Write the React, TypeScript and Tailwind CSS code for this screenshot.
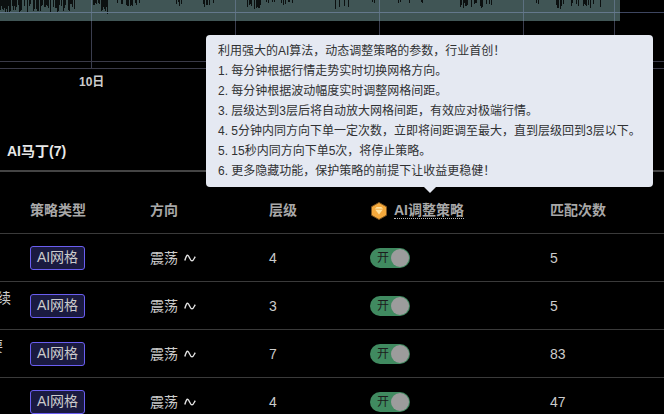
const font = { fontFamily: '"Liberation Sans","Noto Sans CJK SC",sans-serif' };

const tips = [
  "利用强大的AI算法，动态调整策略的参数，行业首创！",
  "1. 每分钟根据行情走势实时切换网格方向。",
  "2. 每分钟根据波动幅度实时调整网格间距。",
  "3. 层级达到3层后将自动放大网格间距，有效应对极端行情。",
  "4. 5分钟内同方向下单一定次数，立即将间距调至最大，直到层级回到3层以下。",
  "5. 15秒内同方向下单5次，将停止策略。",
  "6. 更多隐藏功能，保护策略的前提下让收益更稳健！",
];

const rows = [
  { left: "", pad: "pr-[19px]", level: "4", count: "5" },
  { left: "续", pad: "pr-[19px]", level: "3", count: "5" },
  { left: "要", pad: "pr-[27px]", level: "7", count: "83" },
  { left: "", pad: "pr-[19px]", level: "4", count: "47" },
];

const clusters: [number, number, number, number][] = [
  [0, 11, 15, 0.9],
  [12, 76, 12, 0.75],
  [93, 100, 6, 0.6],
  [101, 108, 15, 0.95],
  [117, 140, 7, 0.55],
  [176, 184, 6, 0.6],
  [203, 216, 7, 0.65],
  [247, 262, 9, 0.7],
  [263, 296, 5, 0.3],
  [335, 350, 11, 0.55],
  [372, 376, 4, 0.5],
  [395, 410, 5, 0.4],
  [420, 423, 3, 0.5],
  [460, 492, 8, 0.45],
  [497, 500, 4, 0.5],
  [536, 539, 6, 0.8],
  [553, 596, 9, 0.4],
  [600, 604, 8, 0.5],
];

function spikes() {
  let seed = 11;
  const r = () => {
    seed = (seed * 16807) % 2147483647;
    return seed / 2147483647;
  };
  let d = "";
  for (const [a, b, depth, density] of clusters) {
    for (let x = a; x < b; x++) {
      if (r() < density) d += `M${x + 0.5} 0V${(depth * (0.35 + 0.65 * r())).toFixed(0)}`;
    }
  }
  return d;
}

function Chart() {
  return (
    <svg width="664" height="70" className="block">
      <rect x="0" y="0" width="620" height="21" fill="#405555" />
      <path d={spikes()} stroke="#0c1010" strokeWidth="1" />
      {[91.5, 235.5, 379.5, 523.5, 614.5].map((x) => (
        <g key={x}>
          <path d={`M${x} 0V21`} stroke="#5c7080" />
          <path d={`M${x} 21V68`} stroke="#3a3d4e" />
        </g>
      ))}
      <path d="M0 12.5H620" stroke="#64788c" />
      <path d="M620 12.5H664" stroke="#3e4660" />
      <path d="M0 61.5H206M0 68.5H206M653 61.5H664M653 68.5H664" stroke="#3a3a48" />
    </svg>
  );
}

function Gem() {
  return (
    <svg width="18" height="18" viewBox="0 0 18 18" className="mr-[6px] shrink-0">
      <path d="M9 .5 16.5 4.7V13.3L9 17.5 1.5 13.3V4.7Z" fill="#f5a93c" stroke="#7d5520" />
      <path d="M4.8 7 6.6 5H11.4L13.2 7 9 12.6Z" fill="#ffe2a0" />
      <path d="M4.8 7.2H13.2" stroke="#ea9a30" strokeWidth=".8" />
    </svg>
  );
}

function Wave() {
  return (
    <svg width="12" height="12" viewBox="0 0 12 12" className="ml-[6px]" fill="none">
      <path d="M.8 8.5C2 4.5 2.8 3 3.8 3.3 5.2 3.7 6 8.8 8 8.8 9.5 8.8 10.4 6 11.2 4.6" stroke="#e4e4e4" strokeWidth="1.4" />
    </svg>
  );
}

function Row({ left, pad, level, count }: { left: string; pad: string; level: string; count: string }) {
  return (
    <div className="flex h-[48px] items-center border-b border-[#3a3a3a] text-[14px] text-[#cccccc]">
      <div className={`flex h-[32px] w-[30px] justify-end overflow-hidden whitespace-nowrap leading-[16px] ${pad}`}>{left}</div>
      <div className="w-[120px]">
        <span className="flex h-[24px] w-[55px] items-center justify-center rounded-[3px] border border-[#6a5ef0] bg-[#1a1a40]">
          AI网格
        </span>
      </div>
      <div className="flex w-[119px] items-center pt-px">
        震荡
        <Wave />
      </div>
      <div className="w-[101px] pt-px">{level}</div>
      <div className="w-[180px]">
        <div className="flex h-[20px] w-[40px] items-center justify-between rounded-full bg-[#408a60] pl-[7px] pr-px text-[12px] text-[#1c1c1c]">
          开
          <span className="h-[18px] w-[18px] rounded-full bg-[#9c9c9c]" />
        </div>
      </div>
      <div className="pt-px">{count}</div>
    </div>
  );
}

export default function App() {
  return (
    <div style={font} className="relative h-[414px] w-[664px] overflow-hidden bg-black">
      <Chart />
      <div className="h-[25px] pl-[79px] pt-[5px] text-[12px] font-bold leading-[14px] text-[#cccccc]">10日</div>
      <div className="flex h-[77px] items-end border-b-2 border-[#444444] pb-[9px] pl-[7px] text-[14px] font-bold leading-[20px] text-[#e8e8e8]">
        AI马丁(7)
      </div>
      <div className="flex h-[62px] items-center border-b border-[#3a3a3a] pt-[16px] text-[14px] font-bold text-[#a8a8a8]">
        <div className="w-[30px]" />
        <div className="w-[120px]">策略类型</div>
        <div className="w-[119px]">方向</div>
        <div className="w-[101px]">层级</div>
        <div className="flex w-[180px] items-center">
          <Gem />
          <span className="border-b border-dotted border-[#bbbbbb] leading-[16px]">AI调整策略</span>
        </div>
        <div>匹配次数</div>
      </div>
      {rows.map((r, i) => (
        <Row key={i} {...r} />
      ))}
      <div className="absolute left-[206px] top-[35px] w-[447px] rounded-[4px] bg-[#e5e9f2] px-[12px] py-[6px] text-[12px] leading-[20px] text-[#303133]">
        {tips.map((t) => (
          <div key={t} className="whitespace-nowrap">{t}</div>
        ))}
        <span className="absolute left-[218px] top-full h-0 w-0 border-x-[6px] border-t-[6px] border-x-transparent border-t-[#e5e9f2]" />
      </div>
    </div>
  );
}
